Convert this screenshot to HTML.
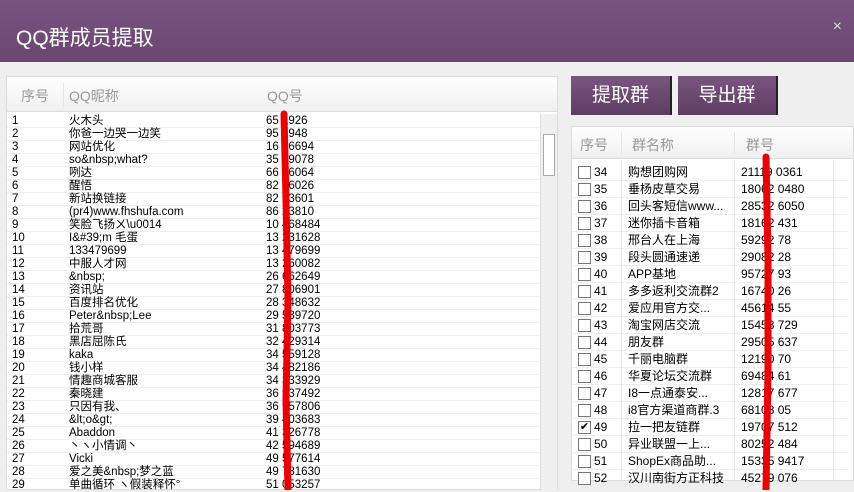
<!DOCTYPE html>
<html><head><meta charset="utf-8"><style>
*{margin:0;padding:0;box-sizing:border-box}
body{width:854px;height:490px;overflow:hidden;background:#efefef;font-family:"Liberation Sans","Noto Sans CJK SC",sans-serif;position:relative}
.title{position:absolute;left:0;top:0;width:854px;height:62px;background:linear-gradient(#785380,#6a4670);color:#fff;font-size:21px;padding:22px 0 0 16px}
.x{position:absolute;right:12px;top:18px;color:#ddd;font-size:16px}
.lp{position:absolute;left:6px;top:76px;width:552px;height:414px;background:#fff;border:1px solid #ddd}
.hd{position:absolute;left:0;top:0;right:0;height:35px;background:linear-gradient(#fff,#f0f0f0);border-bottom:1px solid #ddd;color:#999;font-size:14px}
.hd span{position:absolute;top:9px}
.row{position:absolute;font-size:11.5px;line-height:13px;height:13px;color:#000;white-space:nowrap;border-bottom:1px solid #eee}
.row span{position:absolute;top:0}
.sb{position:absolute;background:#f0f0f0;border-left:1px solid #ddd}
.btn{position:absolute;top:76px;height:39px;background:linear-gradient(#7a5580,#5e3d63);color:#fff;font-size:19px;text-align:center;line-height:39px;border-right:2px solid #222}
.rp{position:absolute;left:571px;top:126px;width:283px;height:355px;background:#fff;border:1px solid #ddd}
.rrow{position:absolute;left:0;width:276px;height:17px;font-size:12px;line-height:17px;white-space:nowrap;border-bottom:1px solid #eee}
.rrow span{position:absolute;top:0}
.cb{position:absolute;left:6px;top:2px;width:13px;height:13px;border:1px solid #777;background:#fff;font-size:11px;line-height:11px;text-align:center}
</style></head><body>
<div class="title">QQ群成员提取<span class="x">×</span></div>
<div class="lp">
<div class="hd"><span style="left:14px">序号</span><span style="left:62px">QQ昵称</span><span style="left:260px">QQ号</span>
<div style="position:absolute;left:56px;top:6px;width:1px;height:24px;background:#e4e4e4"></div></div>
<div id="L"></div>
<div class="sb" style="left:533px;top:37px;width:17px;height:377px"><div style="position:absolute;left:2px;top:20px;width:12px;height:42px;background:#fff;border:1px solid #aaa"></div></div>
</div>
<div class="btn" style="left:571px;width:101px">提取群</div>
<div class="btn" style="left:678px;width:100px">导出群</div>
<div class="rp">
<div class="hd" style="height:32px"><span style="left:8px;top:8px">序号</span><span style="left:60px;top:8px">群名称</span><span style="left:174px;top:8px">群号</span>
<div style="position:absolute;left:49px;top:5px;width:1px;height:22px;background:#e4e4e4"></div><div style="position:absolute;left:162px;top:5px;width:1px;height:22px;background:#e4e4e4"></div></div>
<div id="R"></div>
<div style="position:absolute;left:49px;top:33px;width:1px;height:322px;background:#e8e8e8"></div>
<div style="position:absolute;left:162px;top:33px;width:1px;height:322px;background:#e8e8e8"></div>
<div style="position:absolute;left:261px;top:33px;width:1px;height:322px;background:#e8e8e8"></div>
</div>
<svg style="position:absolute;left:0;top:0" width="854" height="490"><path d="M284 114 L286 200 L288 300 L286 400 L288 490" stroke="#e00" stroke-width="7" fill="none" stroke-linecap="round"/><path d="M766 157 L768 260 L768 370 L766 490" stroke="#e00" stroke-width="7" fill="none" stroke-linecap="round"/></svg>
<script>
var L=[["火木头","65 1926"],["你爸一边哭一边笑","95 5948"],["网站优化","16 56694"],["so&amp;nbsp;what?","35 69078"],["咧达","66 66064"],["醒悟","82 56026"],["新站换链接","82 13601"],["(pr4)www.fhshufa.com","86 23810"],["笑脸飞扬ㄨ\\u0014","10 468484"],["I&amp;#39;m 毛蛋","13 231628"],["133479699","13 479699"],["中服人才网","13 260082"],["&amp;nbsp;","26 662649"],["资讯站","27 806901"],["百度排名优化","28 348632"],["Peter&amp;nbsp;Lee","29 539720"],["拾荒哥","31 803773"],["黑店屈陈氏","32 429314"],["kaka","34 559128"],["钱小样","34 482186"],["情趣商城客服","34 333929"],["秦晓建","36 937492"],["只因有我、","36 957806"],["&amp;lt;o&amp;gt;","39 403683"],["Abaddon","41 326778"],["丶ヽ小情调丶","42 594689"],["Vicki","49 577614"],["爱之美&amp;nbsp;梦之蓝","49 781630"],["单曲循环 ヽ假装释怀°","51 053257"]];
var h="";L.forEach(function(r,i){h+='<div class="row" style="left:0;width:532px;top:'+(38+i*13)+'px"><span style="left:5px">'+(i+1)+'</span><span style="left:62px">'+r[0]+'</span><span style="left:259px">'+r[1]+'</span></div>'});
document.getElementById("L").innerHTML=h;
var R=[["购想团购网","21119 0361"],["垂杨皮草交易","18062 0480"],["回头客短信www...","28532 6050"],["迷你插卡音箱","18162 431"],["邢台人在上海","59292 78"],["段头圆通速递","29082 28"],["APP基地","95727 93"],["多多返利交流群2","16740 26"],["爱应用官方交...","45614 55"],["淘宝网店交流","15458 729"],["朋友群","29505 637"],["千丽电脑群","12190 70"],["华夏论坛交流群","69484 61"],["I8一点通泰安...","12817 677"],["i8官方渠道商群.3","68108 05"],["拉一把友链群","19707 512"],["异业联盟一上...","80252 484"],["ShopEx商品助...","15335 9417"],["汉川南街方正科技","45279 076"]];
h="";R.forEach(function(r,i){h+='<div class="rrow" style="top:'+(37+i*17)+'px"><div class="cb">'+(i==15?'✔':'')+'</div><span style="left:22px">'+(34+i)+'</span><span style="left:56px">'+r[0]+'</span><span style="left:169px">'+r[1]+'</span></div>'});
document.getElementById("R").innerHTML=h;
</script>
</body></html>
